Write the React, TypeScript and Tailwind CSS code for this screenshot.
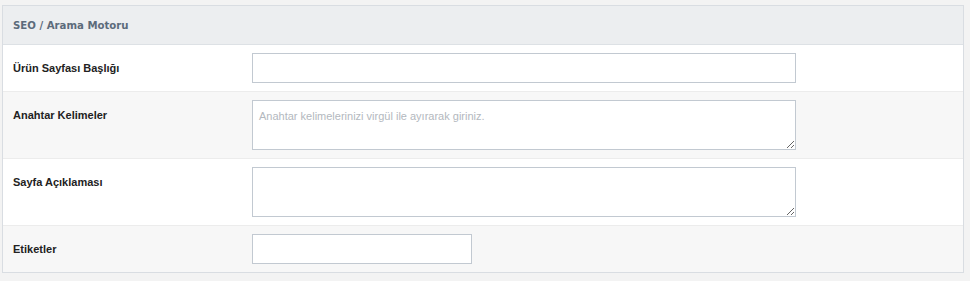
export default function App() {
  const rows = [
    { label: "Ürün Sayfası Başlığı", kind: "input", w: "w-[544px]", bg: "bg-white" },
    { label: "Anahtar Kelimeler", kind: "textarea", ph: "Anahtar kelimelerinizi virgül ile ayırarak giriniz.", bg: "bg-[#f7f7f7]" },
    { label: "Sayfa Açıklaması", kind: "textarea", ph: "", bg: "bg-white" },
    { label: "Etiketler", kind: "input", w: "w-[220px]", bg: "bg-[#f7f7f7]" },
  ];

  return (
    <div className="min-h-[281px] w-[970px] bg-[#f3f3f3] pt-[5px] pl-[2px] font-['Liberation_Sans',sans-serif]">
      <div className="w-[962px] border border-[#d9dde2] bg-white">
        {/* header */}
        <div className="flex h-[39px] items-center border-b border-[#dde1e5] bg-[#eceef0] px-[10px] pt-[2px]">
          <span className="font-['DejaVu_Sans_Condensed','DejaVu_Sans',sans-serif] text-[11.3px] font-bold text-[#5c6b7b]">
            SEO / Arama Motoru
          </span>
        </div>

        {rows.map((r, i) => (
          <div
            key={i}
            className={`flex px-[10px] py-[8px] ${r.bg} ${i < rows.length - 1 ? "border-b border-[#ececec]" : ""}`}
          >
            <label className="h-[30px] w-[239px] shrink-0 text-[11px] font-bold leading-[31px] text-[#222]">
              {r.label}
            </label>
            {r.kind === "input" ? (
              <input
                type="text"
                className={`h-[30px] ${r.w} border border-[#c2c9d1] bg-white px-[6px] text-[11px] outline-none`}
              />
            ) : (
              <textarea
                placeholder={r.ph}
                className="h-[50px] w-[544px] border border-[#c2c9d1] bg-white px-[6px] pt-[8px] pb-[4px] text-[11px] leading-[14px] text-[#333] outline-none placeholder:text-[#b3b8be]"
              />
            )}
          </div>
        ))}
      </div>
    </div>
  );
}
